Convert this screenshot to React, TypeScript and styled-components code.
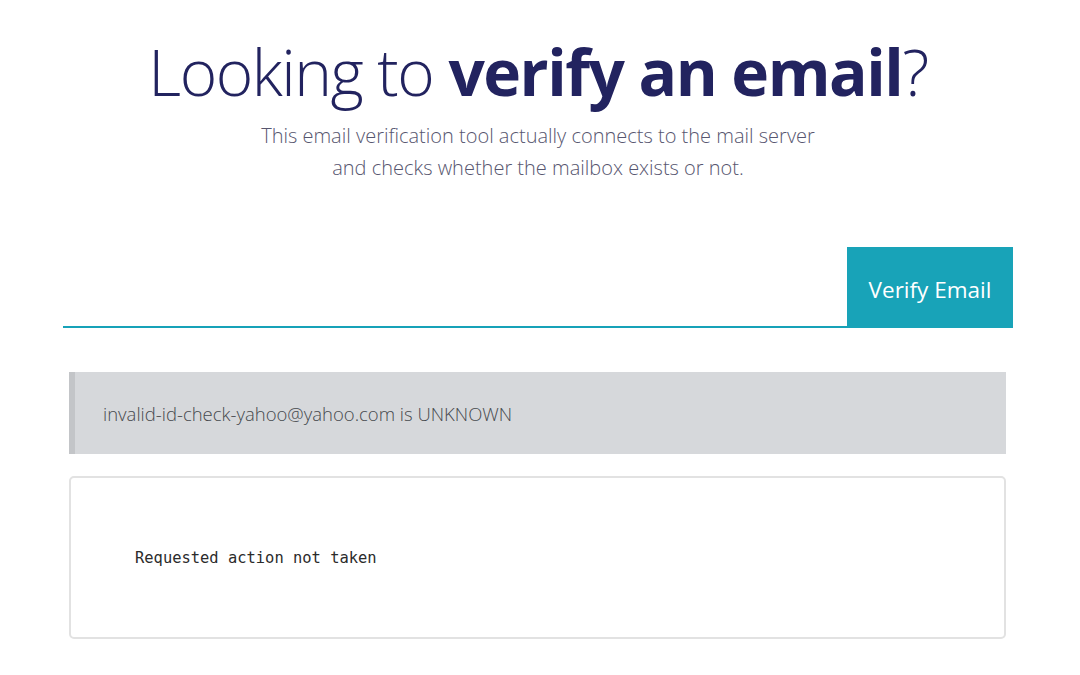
import React from 'react'
import styled, { createGlobalStyle } from 'styled-components'

const GlobalStyle = createGlobalStyle`
  html, body {
    margin: 0;
    padding: 0;
    background: #ffffff;
  }
  body {
    font-family: "Open Sans", "Noto Sans", sans-serif;
  }
`

const Page = styled.div`
  width: 950px;
  margin: 0 auto;
  padding-top: 32px;
  transform: translateX(-2px);
`

const Title = styled.h1`
  margin: 0;
  text-align: center;
  font-size: 64px;
  line-height: 80px;
  font-weight: 300;
  color: #22235f;
  letter-spacing: -1.5px;

  strong {
    font-weight: 700;
  }
`

const Lead = styled.p`
  margin: 8px 0 0;
  text-align: center;
  font-size: 20px;
  line-height: 32px;
  font-weight: 300;
  color: #57566f;
`

const Form = styled.form`
  display: flex;
  align-items: stretch;
  margin-top: 63px;
  height: 81px;
  border-bottom: 2px solid #17a2b8;
  box-sizing: border-box;
`

const Input = styled.input`
  flex: 1;
  border: none;
  outline: none;
  background: transparent;
  font-family: inherit;
  font-size: 20px;
`

const Button = styled.button`
  width: 166px;
  border: none;
  background: #18a3b8;
  color: #ffffff;
  font-family: inherit;
  font-size: 22.5px;
  font-weight: 400;
  padding: 4px 0 0;
  margin-bottom: -2px;
  cursor: pointer;
`

const Results = styled.div`
  padding: 0 7px 0 6px;
  margin-top: 44px;
  display: flex;
  flex-direction: column;
  gap: 22px;
`

const Alert = styled.div`
  height: 82px;
  box-sizing: border-box;
  display: flex;
  align-items: center;
  padding-left: 28px;
  background: #d6d8db;
  border-left: 6px solid #c3c5c8;
  color: #474a4e;
  font-size: 18.5px;
  font-weight: 300;
`

const Card = styled.div`
  height: 163px;
  box-sizing: border-box;
  display: flex;
  align-items: center;
  padding-left: 64px;
  border: 2px solid #e2e2e2;
  border-radius: 5px;
  background: #ffffff;
`

const Mono = styled.pre`
  margin: 0;
  font-family: "DejaVu Sans Mono", "Liberation Mono", monospace;
  font-size: 15.45px;
  color: #2b2b2b;
`

export default function App() {
  return (
    <>
      <GlobalStyle />
      <Page>
        <Title>
          Looking to <strong>verify an email</strong>?
        </Title>
        <Lead>
          This email verification tool actually connects to the mail server
          <br />
          and checks whether the mailbox exists or not.
        </Lead>
        <Form onSubmit={(e) => e.preventDefault()}>
          <Input type="email" aria-label="Email address" />
          <Button type="submit">Verify Email</Button>
        </Form>
        <Results>
          <Alert>invalid-id-check-yahoo@yahoo.com is UNKNOWN</Alert>
          <Card>
            <Mono>Requested action not taken</Mono>
          </Card>
        </Results>
      </Page>
    </>
  )
}
